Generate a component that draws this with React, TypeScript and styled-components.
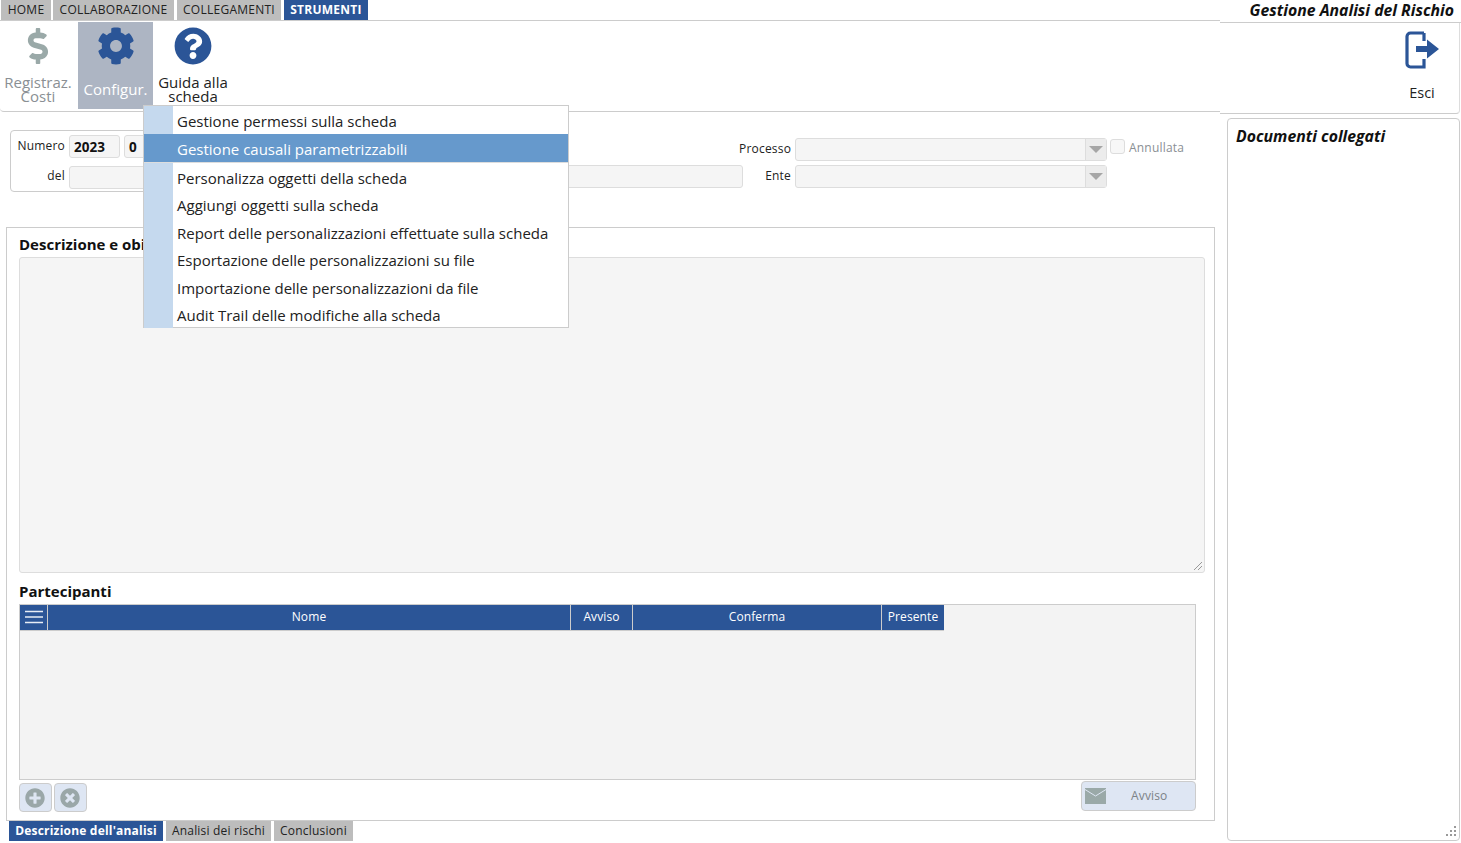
import React from "react";
import styled, { createGlobalStyle } from "styled-components";
import { FaDollarSign, FaCog, FaQuestionCircle, FaPlusCircle, FaTimesCircle } from "react-icons/fa";

const Global = createGlobalStyle`
  html, body { margin: 0; padding: 0; background: #fff; overflow: hidden; }
  body, input { font-family: "Open Sans", "Liberation Sans", sans-serif; color: #222; }
  * { box-sizing: border-box; }
`;

const BLUE = "#2b5597";

const Page = styled.div`
  position: relative;
  width: 1461px;
  height: 843px;
  display: flex;
  overflow: hidden;
`;
const LeftCol = styled.div`
  width: 1220px;
  display: flex;
  flex-direction: column;
`;
const RightCol = styled.div`
  width: 241px;
  display: flex;
  flex-direction: column;
`;
const TabBar = styled.div`
  height: 21px;
  display: flex;
  padding-left: 1px;
  border-bottom: 1px solid #ccc;
`;
const TopTab = styled.div<{ $w: number; $gap: number; $active?: boolean }>`
  width: ${(p) => p.$w}px;
  margin-right: ${(p) => p.$gap}px;
  height: 20px;
  padding-bottom: 2px;
  display: flex;
  align-items: center;
  justify-content: center;
  font-size: 12px;
  letter-spacing: 0.25px;
  background: ${(p) => (p.$active ? BLUE : "#bdbdbd")};
  color: ${(p) => (p.$active ? "#fff" : "#222")};
  font-weight: ${(p) => (p.$active ? 700 : 400)};
`;
const Ribbon = styled.div`
  height: 91px;
  display: flex;
  align-items: flex-start;
  padding-top: 1px;
  border-bottom: 1px solid #ccc;
  border-radius: 0 0 0 4px;
`;
const RibbonBtn = styled.div<{ $w: number; $selected?: boolean; $muted?: boolean; $ml?: number }>`
  width: ${(p) => p.$w}px;
  margin-left: ${(p) => p.$ml ?? 0}px;
  height: 87px;
  display: flex;
  flex-direction: column;
  align-items: center;
  background: ${(p) => (p.$selected ? "#adb5c3" : "transparent")};
  color: ${(p) => (p.$selected ? "#fff" : p.$muted ? "#8a8f94" : "#222")};
`;
const IconSlot = styled.div<{ $color: string }>`
  height: 50px;
  width: 100%;
  display: flex;
  justify-content: center;
  align-items: center;
  padding-bottom: 2px;
  color: ${(p) => p.$color};
`;
const RibbonLabel = styled.div<{ $mt: number }>`
  margin-top: ${(p) => p.$mt}px;
  font-size: 15px;
  line-height: 14px;
  text-align: center;
  white-space: nowrap;
`;

const FormRow = styled.div`
  height: 115px;
  display: flex;
  align-items: flex-start;
  padding: 18px 0 0 10px;
`;
const NumberBox = styled.div`
  width: 160px;
  height: 62px;
  border: 1px solid #ccc;
  border-radius: 4px;
  padding: 4px 0 0 0;
  display: grid;
  grid-template-columns: 54px 51px 24px;
  grid-auto-rows: 23px;
  column-gap: 4px;
  row-gap: 8px;
`;
const SmallLabel = styled.div<{ $muted?: boolean; $lh?: number }>`
  font-size: 12px;
  line-height: ${(p) => p.$lh ?? 21}px;
  letter-spacing: 0.2px;
  text-align: right;
  white-space: nowrap;
  color: ${(p) => (p.$muted ? "#8a8f94" : "#222")};
`;
const Field = styled.div<{ $w?: number; $ml?: number; $mt?: number; $span?: boolean }>`
  ${(p) => (p.$w ? `width: ${p.$w}px;` : "")}
  ${(p) => (p.$ml ? `margin-left: ${p.$ml}px;` : "")}
  ${(p) => (p.$mt ? `margin-top: ${p.$mt}px;` : "")}
  ${(p) => (p.$span ? "grid-column: 2 / 4;" : "")}
  height: 23px;
  padding: 0 4px;
  background: #f5f5f5;
  border: 1px solid #ddd;
  border-radius: 3px;
  font-size: 13.5px;
  font-weight: 700;
  line-height: 23px;
  color: #111;
`;
const ProcessGrid = styled.div`
  margin: 8px 0 0 -4px;
  display: grid;
  grid-template-columns: 52px 312px auto;
  grid-template-rows: 23px 23px;
  column-gap: 4px;
  row-gap: 4px;
`;
const Combo = styled.div`
  height: 23px;
  display: flex;
  justify-content: flex-end;
  background: #f5f5f5;
  border: 1px solid #ddd;
  border-radius: 3px;
`;
const ComboBtn = styled.div`
  width: 21px;
  display: flex;
  align-items: center;
  justify-content: center;
  background: #ececec;
  border-left: 1px solid #ddd;
  &::before {
    content: "";
    border-left: 7px solid transparent;
    border-right: 7px solid transparent;
    border-top: 7px solid #a6a6a6;
  }
`;
const CheckWrap = styled.div`
  display: flex;
  align-items: flex-start;
  gap: 4px;
  margin-left: -1px;
`;
const CheckBox = styled.div`
  width: 15px;
  height: 15px;
  margin-top: 1px;
  background: #f7f7f7;
  border: 1px solid #ddd;
  border-radius: 3px;
`;

const Panel = styled.div`
  margin-left: 6px;
  width: 1209px;
  height: 594px;
  border: 1px solid #ccc;
  padding: 6px 0 0 12px;
  display: flex;
  flex-direction: column;
`;
const SectionTitle = styled.div<{ $mt?: number }>`
  font-size: 15px;
  font-weight: 700;
  line-height: 20px;
  margin-top: ${(p) => p.$mt ?? 0}px;
  margin-bottom: 3px;
  color: #111;
`;
const TextArea = styled.div`
  position: relative;
  width: 1186px;
  height: 316px;
  background: #f5f5f5;
  border: 1px solid #ddd;
  border-radius: 3px;
`;
const Grip = styled.svg`
  position: absolute;
  right: 1px;
  bottom: 1px;
`;
const DocsGrip = styled.svg`
  position: absolute;
  right: 2px;
  bottom: 4px;
`;
const Grid = styled.div`
  width: 1177px;
  height: 176px;
  background: #f3f3f3;
  border: 1px solid #ccc;
`;
const GridHead = styled.div`
  display: flex;
  height: 25px;
  width: 924px;
  background: ${BLUE};
  border-bottom: 1px solid #ccc;
  box-sizing: content-box;
`;
const HeadCell = styled.div<{ $w: number }>`
  width: ${(p) => p.$w}px;
  padding-bottom: 2px;
  border-right: 1px solid #ccc;
  color: #fff;
  font-size: 12px;
  letter-spacing: 0.1px;
  line-height: 22px;
  text-align: center;
  display: flex;
  align-items: center;
  justify-content: center;
  &:last-child { border-right: 0; }
`;
const Actions = styled.div`
  width: 1177px;
  display: flex;
  justify-content: space-between;
  align-items: flex-start;
  margin-top: 1px;
`;
const ActionsLeft = styled.div`
  display: flex;
  gap: 2px;
  margin-top: 2px;
`;
const IconBtn = styled.div`
  width: 33px;
  height: 29px;
  padding-right: 1px;
  display: flex;
  align-items: center;
  justify-content: center;
  background: #dee6f3;
  border: 1px solid #ccc;
  border-radius: 4px;
  color: #9aa7a8;
`;
const NoticeBtn = styled.div`
  width: 115px;
  height: 30px;
  display: flex;
  align-items: center;
  padding-left: 3px;
  background: #dee6f3;
  border: 1px solid #ccc;
  border-radius: 4px;
  font-size: 12px;
  letter-spacing: 0.15px;
  color: #7c8287;
`;
const NoticeLabel = styled.span`
  margin: 0 0 2px 25px;
`;
const BottomTabs = styled.div`
  display: flex;
  padding-left: 9px;
  gap: 3px;
`;
const BottomTab = styled.div<{ $w: number; $active?: boolean }>`
  width: ${(p) => p.$w}px;
  height: 20px;
  padding-bottom: 2px;
  display: flex;
  align-items: center;
  justify-content: center;
  font-size: 12px;
  letter-spacing: 0.2px;
  white-space: nowrap;
  background: ${(p) => (p.$active ? BLUE : "#bdbdbd")};
  color: ${(p) => (p.$active ? "#fff" : "#222")};
  font-weight: ${(p) => (p.$active ? 700 : 400)};
`;

const AppTitle = styled.div`
  height: 23px;
  border-bottom: 1px solid #ccc;
  padding-right: 7px;
  text-align: right;
  font-size: 15.8px;
  line-height: 20px;
  font-weight: 700;
  font-style: italic;
  color: #111;
`;
const ExitBox = styled.div`
  width: 240px;
  height: 91px;
  display: flex;
  flex-direction: column;
  align-items: flex-end;
  border-right: 1px solid #ddd;
  border-bottom: 1px solid #ccc;
  border-radius: 0 0 4px 0;
`;
const ExitInner = styled.div`
  width: 74px;
  display: flex;
  flex-direction: column;
  align-items: center;
  padding-top: 7px;
  font-size: 14.5px;
  line-height: 18px;
`;
const ExitLabel = styled.div`
  margin-top: 14px;
`;
const DocsPanel = styled.div`
  position: relative;
  margin: 4px 0 0 7px;
  width: 233px;
  height: 723px;
  border: 1px solid #ccc;
  border-radius: 4px;
  padding: 7px 8px;
  font-size: 15.8px;
  line-height: 20px;
  font-weight: 700;
  font-style: italic;
  color: #111;
`;

const Menu = styled.div`
  position: absolute;
  left: 143px;
  top: 105px;
  width: 426px;
  height: 223px;
  background: #fff;
  border: 1px solid #ccc;
  display: flex;
  flex-direction: column;
  z-index: 5;
`;
const MenuItem = styled.div<{ $active?: boolean; $h: number }>`
  height: ${(p) => p.$h}px;
  display: flex;
  flex: none;
  align-items: center;
  font-size: 15px;
  white-space: nowrap;
  color: ${(p) => (p.$active ? "#fff" : "#222")};
  background: ${(p) => (p.$active ? "#6699cc" : "transparent")};
  &::before {
    content: "";
    align-self: stretch;
    width: 29px;
    margin-right: 4px;
    flex: none;
    background: ${(p) => (p.$active ? "transparent" : "#c5d9ee")};
  }
`;
const MenuText = styled.span<{ $nudge: boolean }>`
  margin-top: ${(p) => (p.$nudge ? 2 : 0)}px;
`;
const MenuSep = styled.div`
  height: 1px;
  flex: none;
  background: #ddd;
`;

const ExitIcon = () => (
  <svg width="36" height="40" viewBox="0 0 36 40">
    <path d="M20 3H6.5A3.5 3.5 0 0 0 3 6.500V33.500A3.500 3.500 0 0 0 6.500 37H20V29" fill="none" stroke={BLUE} strokeWidth="3.200" />
    <path d="M20 11V3" fill="none" stroke={BLUE} strokeWidth="3.200" />
    <path d="M12 16H23V9.500L35 19L23 28.500V22H12Z" fill={BLUE} />
  </svg>
);
const MailIcon = () => (
  <svg width="21" height="16" viewBox="0 0 21 16">
    <rect width="21" height="16" fill="#9aa9a8" />
    <path d="M0 1.500L10.500 8L21 1.500" fill="none" stroke="#dee6f3" strokeWidth="1" />
  </svg>
);
const Burger = () => (
  <svg width="18" height="14" viewBox="0 0 18 14">
    <path d="M0 1.500H18M0 7H18M0 12.500H18" stroke="#e8edf5" strokeWidth="1.600" />
  </svg>
);

const menuItems: [string, number, boolean?][] = [
  ["Gestione permessi sulla scheda", 28],
  ["Gestione causali parametrizzabili", 28, true],
];
const menuRest: [string, number][] = [
  ["Personalizza oggetti della scheda", 28],
  ["Aggiungi oggetti sulla scheda", 27],
  ["Report delle personalizzazioni effettuate sulla scheda", 28],
  ["Esportazione delle personalizzazioni su file", 27],
  ["Importazione delle personalizzazioni da file", 28],
  ["Audit Trail delle modifiche alla scheda", 27],
];

export default function App() {
  return (
    <Page>
      <Global />
      <LeftCol>
        <TabBar>
          <TopTab $w={50} $gap={2}>HOME</TopTab>
          <TopTab $w={121} $gap={3}>COLLABORAZIONE</TopTab>
          <TopTab $w={104} $gap={3}>COLLEGAMENTI</TopTab>
          <TopTab $w={84} $gap={0} $active>STRUMENTI</TopTab>
        </TabBar>
        <Ribbon>
          <RibbonBtn $w={76} $muted>
            <IconSlot $color="#9aa9a8"><FaDollarSign size={36} /></IconSlot>
            <RibbonLabel $mt={3}>Registraz.<br />Costi</RibbonLabel>
          </RibbonBtn>
          <RibbonBtn $w={75} $ml={2} $selected>
            <IconSlot $color={BLUE}><FaCog size={38} /></IconSlot>
            <RibbonLabel $mt={10}>Configur.</RibbonLabel>
          </RibbonBtn>
          <RibbonBtn $w={80} $ml={0}>
            <IconSlot $color={BLUE}><FaQuestionCircle size={38} /></IconSlot>
            <RibbonLabel $mt={3}>Guida alla<br />scheda</RibbonLabel>
          </RibbonBtn>
        </Ribbon>
        <FormRow>
          <NumberBox>
            <SmallLabel>Numero</SmallLabel>
            <Field>2023</Field>
            <Field>0</Field>
            <SmallLabel $lh={19}>del</SmallLabel>
            <Field $span />
          </NumberBox>
          <Field $w={573} $mt={35} />
          <ProcessGrid>
            <SmallLabel>Processo</SmallLabel>
            <Combo><ComboBtn /></Combo>
            <CheckWrap><CheckBox /><SmallLabel $muted $lh={19}>Annullata</SmallLabel></CheckWrap>
            <SmallLabel>Ente</SmallLabel>
            <Combo><ComboBtn /></Combo>
          </ProcessGrid>
        </FormRow>
        <Panel>
          <SectionTitle>Descrizione e obiettivi</SectionTitle>
          <TextArea>
            <Grip width="10" height="10" viewBox="0 0 10 10">
              <path d="M9 1L1 9M9 5L5 9" stroke="#999" strokeWidth="1" />
            </Grip>
          </TextArea>
          <SectionTitle $mt={8}>Partecipanti</SectionTitle>
          <Grid>
            <GridHead>
              <HeadCell $w={28}><Burger /></HeadCell>
              <HeadCell $w={523}>Nome</HeadCell>
              <HeadCell $w={62}>Avviso</HeadCell>
              <HeadCell $w={249}>Conferma</HeadCell>
              <HeadCell $w={62}>Presente</HeadCell>
            </GridHead>
          </Grid>
          <Actions>
            <ActionsLeft>
              <IconBtn><FaPlusCircle size={20} /></IconBtn>
              <IconBtn><FaTimesCircle size={20} /></IconBtn>
            </ActionsLeft>
            <NoticeBtn><MailIcon /><NoticeLabel>Avviso</NoticeLabel></NoticeBtn>
          </Actions>
        </Panel>
        <BottomTabs>
          <BottomTab $w={154} $active>Descrizione dell'analisi</BottomTab>
          <BottomTab $w={105}>Analisi dei rischi</BottomTab>
          <BottomTab $w={79}>Conclusioni</BottomTab>
        </BottomTabs>
      </LeftCol>
      <RightCol>
        <AppTitle>Gestione Analisi del Rischio</AppTitle>
        <ExitBox>
          <ExitInner>
            <ExitIcon />
            <ExitLabel>Esci</ExitLabel>
          </ExitInner>
        </ExitBox>
        <DocsPanel>
          Documenti collegati
          <DocsGrip width="11" height="10" viewBox="0 0 11 10">
            <path d="M8 0h2v2h-2zM4 4h2v2h-2zM8 4h2v2h-2zM0 8h2v2H0zM4 8h2v2H4zM8 8h2v2h-2z" fill="#999" />
          </DocsGrip>
        </DocsPanel>
      </RightCol>
      <Menu>
        {menuItems.map(([t, h, a]) => (
          <MenuItem key={t} $h={h} $active={a}><MenuText $nudge={h === 28}>{t}</MenuText></MenuItem>
        ))}
        <MenuSep />
        {menuRest.map(([t, h]) => (
          <MenuItem key={t} $h={h}><MenuText $nudge={h === 28}>{t}</MenuText></MenuItem>
        ))}
      </Menu>
    </Page>
  );
}
